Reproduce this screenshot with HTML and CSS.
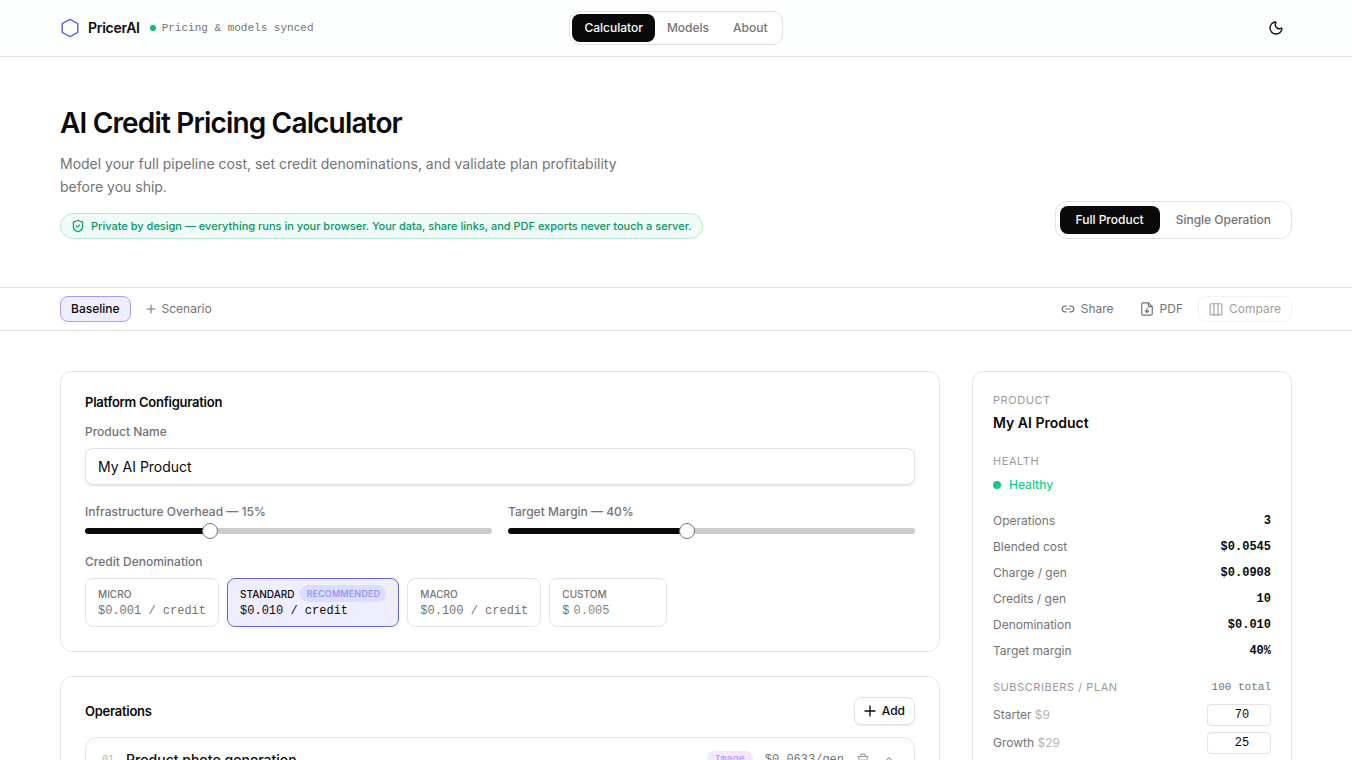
FILE: index.html
```
<!DOCTYPE html>
<html lang="en">
<head>
	<meta charset="UTF-8">
	<meta name="viewport" content="width=device-width, initial-scale=1">
	<title>PricerAI</title>
	<link rel="stylesheet" href="styles.css">
</head>
<body>
	<header class="header">
		<div class="wrap header-in">
			<div class="brand">
				<svg class="logo" width="20" height="20" viewBox="0 0 20 20"><path d="M10 1.3l7.800 4.300v8.800L10 18.700l-7.800-4.300V5.600z"/></svg>
				<span class="brand-name">PricerAI</span>
				<span class="sync"><i class="dot"></i>Pricing &amp; models synced</span>
			</div>
			<nav class="seg">
				<a class="on" href="#">Calculator</a>
				<a href="#">Models</a>
				<a href="#">About</a>
			</nav>
			<button class="theme" type="button" aria-label="Toggle theme">
				<svg class="icon" width="16" height="16" viewBox="0 0 24 24"><path d="M20.985 12.486a9 9 0 1 1-9.473-9.472c.405-.022.617.46.402.803a6 6 0 0 0 8.268 8.268c.344-.215.825-.004.803.401"/></svg>
			</button>
		</div>
	</header>

	<section class="wrap hero">
		<div>
			<h1>AI Credit Pricing Calculator</h1>
			<p class="intro">Model your full pipeline cost, set credit denominations, and validate plan profitability before you ship.</p>
			<p class="private">
				<svg class="icon" width="14" height="14" viewBox="0 0 24 24"><path d="M20 13c0 5-3.500 7.500-7.660 8.950a1 1 0 0 1-.67-.01C7.500 20.500 4 18 4 13V6a1 1 0 0 1 1-1c2 0 4.500-1.200 6.240-2.720a1.170 1.170 0 0 1 1.520 0C14.510 3.810 17 5 19 5a1 1 0 0 1 1 1z"/><path d="m9 12 2 2 4-4"/></svg>
				Private by design — everything runs in your browser. Your data, share links, and PDF exports never touch a server.
			</p>
		</div>
		<div class="seg seg-mode">
			<button class="on" type="button">Full Product</button>
			<button type="button">Single Operation</button>
		</div>
	</section>

	<div class="toolbar">
		<div class="wrap toolbar-in">
			<button class="tool tool-on" type="button">Baseline</button>
			<button class="tool" type="button">
				<svg class="icon" width="10" height="10" viewBox="0 0 10 10"><path d="M5 1v8M1 5h8" stroke-width="1"/></svg>
				Scenario
			</button>
			<span class="space"></span>
			<button class="tool" type="button">
				<svg class="icon" width="14" height="14" viewBox="0 0 24 24"><path d="M9 17H7A5 5 0 0 1 7 7h2M15 7h2a5 5 0 1 1 0 10h-2M8 12h8"/></svg>
				Share
			</button>
			<button class="tool" type="button">
				<svg class="icon" width="14" height="14" viewBox="0 0 24 24"><path d="M14.500 1.500H5a2 2 0 0 0-2 2v17a2 2 0 0 0 2 2h14a2 2 0 0 0 2-2V8z"/><path d="M14.500 1.500V8H21M12 11v7M9 15l3 3 3-3"/></svg>
				PDF
			</button>
			<button class="tool tool-off" type="button" disabled>
				<svg class="icon" width="14" height="14" viewBox="0 0 24 24"><rect x="2" y="3" width="20" height="19" rx="2"/><path d="M8.500 3v19M15.500 3v19"/></svg>
				Compare
			</button>
		</div>
	</div>

	<main class="wrap main">
		<div class="col">
			<section class="card">
				<h2>Platform Configuration</h2>
				<label class="label" for="name">Product Name</label>
				<input class="text" id="name" type="text" value="My AI Product">
				<div class="sliders">
					<div>
						<label class="label" for="infra">Infrastructure Overhead — 15%</label>
						<input class="range" id="infra" type="range" min="0" max="50" value="15" style="--fill: 30%">
					</div>
					<div>
						<label class="label" for="margin">Target Margin — 40%</label>
						<input class="range" id="margin" type="range" min="5" max="85" value="40" style="--fill: 44%">
					</div>
				</div>
				<div class="label">Credit Denomination</div>
				<div class="options">
					<button class="option" type="button">
						<span class="option-name">Micro</span>
						<span class="option-val">$0.001 / credit</span>
					</button>
					<button class="option option-on" type="button">
						<span class="option-name">Standard <em>Recommended</em></span>
						<span class="option-val">$0.010 / credit</span>
					</button>
					<button class="option" type="button">
						<span class="option-name">Macro</span>
						<span class="option-val">$0.100 / credit</span>
					</button>
					<div class="option">
						<label class="option-name" for="custom">Custom</label>
						<span class="option-val">$<input id="custom" type="text" placeholder="0.005"></span>
					</div>
				</div>
			</section>

			<section class="card">
				<div class="card-head">
					<h2>Operations</h2>
					<button class="add" type="button">
						<svg class="icon" width="12" height="12" viewBox="0 0 12 12"><path d="M6 1v10M1 6h10" stroke-width="1.300"/></svg>
						Add
					</button>
				</div>
				<div class="op">
					<span class="op-num">01</span>
					<span class="op-name">Product photo generation</span>
					<span class="tag">Image</span>
					<span class="op-cost">$0.0633/gen</span>
					<button class="op-btn" type="button" aria-label="Delete">
						<svg class="icon" width="14" height="14" viewBox="0 0 24 24"><path d="M3 6h18M19 6v14a2 2 0 0 1-2 2H7a2 2 0 0 1-2-2V6M8 6V4a2 2 0 0 1 2-2h4a2 2 0 0 1 2 2v2M10 11v6M14 11v6"/></svg>
					</button>
					<button class="op-btn" type="button" aria-label="Collapse">
						<svg class="icon" width="14" height="14" viewBox="0 0 24 24"><path d="m7 13 5-5 5 5"/></svg>
					</button>
				</div>
			</section>
		</div>

		<aside class="card side">
			<h3>Product</h3>
			<p class="side-name">My AI Product</p>
			<h3>Health</h3>
			<p class="health"><i class="dot"></i>Healthy</p>
			<dl class="stats">
				<div><dt>Operations</dt><dd>3</dd></div>
				<div><dt>Blended cost</dt><dd>$0.0545</dd></div>
				<div><dt>Charge / gen</dt><dd>$0.0908</dd></div>
				<div><dt>Credits / gen</dt><dd>10</dd></div>
				<div><dt>Denomination</dt><dd>$0.010</dd></div>
				<div><dt>Target margin</dt><dd>40%</dd></div>
			</dl>
			<div class="subs-head"><h3>Subscribers / plan</h3><span>100 total</span></div>
			<div class="plan">
				<label for="starter">Starter <span>$9</span></label>
				<input id="starter" type="text" inputmode="numeric" value="70">
			</div>
			<div class="plan">
				<label for="growth">Growth <span>$29</span></label>
				<input id="growth" type="text" inputmode="numeric" value="25">
			</div>
		</aside>
	</main>
</body>
</html>
```

FILE: styles.css
```
*{ margin: 0; padding: 0; box-sizing: border-box; }
:root{ --ink: #0a0a0a; --gray: #737373; --light: #a1a1a1; --line: #e2e2e5; --mono: "Liberation Mono", monospace; }
html{ scrollbar-width: none; }
body{ font: 12px/16px Inter, sans-serif; color: var(--ink); background: #fff; }
button, input{ font: inherit; color: inherit; border: 0; background: none; outline: 0; }
button{ cursor: pointer; }
a{ color: inherit; text-decoration: none; }
h1, h2, h3{ font-weight: 600; }
.wrap{ max-width: 1280px; margin: 0 auto; padding: 0 24px; }
.icon{ fill: none; stroke: currentColor; stroke-width: 2; stroke-linecap: round; stroke-linejoin: round; flex: none; }
.dot{ width: 6px; height: 6px; border-radius: 50%; background: #10b981; flex: none; }

/* header */
.header{ border-bottom: 1px solid var(--line); background: #fdfefe; }
.header-in{ display: grid; grid-template-columns: 1fr auto 1fr; align-items: center; height: 56px; }
.brand{ display: flex; align-items: center; gap: 8px; }
.logo{ fill: none; stroke: #6366f1; stroke-width: 1.5; stroke-linejoin: round; }
.brand-name{ font-size: 14px; font-weight: 600; letter-spacing: -0.02em; }
.sync{ display: flex; align-items: center; gap: 6px; margin-left: 2px; font: 11px/16px var(--mono); color: var(--gray); }
.seg{ display: flex; padding: 2px; border: 1px solid var(--line); border-radius: 10px; background: #fff; }
.seg a, .seg button{ padding: 0 12px; line-height: 28px; border-radius: 8px; font-weight: 500; color: var(--gray); }
.seg .on{ background: var(--ink); color: #fff; }
.theme{ justify-self: end; display: flex; padding: 8px; }

/* hero */
.hero{ display: flex; justify-content: space-between; align-items: flex-end; padding-top: 48px; padding-bottom: 48px; }
h1{ font-size: 28px; line-height: 36px; letter-spacing: -0.03em; }
.intro{ max-width: 576px; margin: 11px 0 15px; font-size: 14px; line-height: 23px; color: var(--gray); }
.private{ display: flex; width: fit-content; align-items: center; gap: 6px; padding: 4px 10px; border: 1px solid #b5ead6; border-radius: 13px; background: #f0fbf7; font-size: 11px; font-weight: 500; color: #059669; }
.seg-mode{ padding: 4px; border-radius: 12px; }
.seg-mode button{ padding: 0 16px; }

/* toolbar */
.toolbar{ border: solid var(--line); border-width: 1px 0; }
.toolbar-in{ display: flex; gap: 4px; padding-top: 8px; padding-bottom: 8px; }
.space{ flex: 1; }
.tool{ display: flex; align-items: center; gap: 6px; padding: 4px 10px; border: 1px solid transparent; border-radius: 8px; color: var(--gray); }
.tool-on{ border-color: #a5a0f3; background: #efeefe; color: var(--ink); font-weight: 500; }
.tool-off{ border-color: #f2f2f3; color: var(--light); }

/* cards */
.main{ display: grid; grid-template-columns: minmax(0, 1fr) 320px; gap: 32px; align-items: start; padding-top: 40px; padding-bottom: 48px; }
.col{ display: grid; gap: 24px; }
.card{ padding: 20px 24px 24px; border: 1px solid var(--line); border-radius: 12px; }
h2{ font-size: 13px; line-height: 20px; letter-spacing: -0.02em; }
.label{ display: block; font-weight: 500; color: var(--gray); }
.card > h2{ margin-bottom: 12px; }
.text{ width: 100%; height: 37px; margin: 8px 0 19px; padding: 0 12px; border: 1px solid var(--line); border-radius: 8px; box-shadow: 0 1px 2px rgba(0,0,0,.12); font-size: 14px; }
.sliders{ display: grid; grid-template-columns: 1fr 1fr; gap: 16px; margin-bottom: 15px; }
.range{ -webkit-appearance: none; appearance: none; display: block; width: 100%; height: 16px; margin-top: 3px; }
.range::-webkit-slider-runnable-track{ height: 6px; border-radius: 3px; background: linear-gradient(to right, var(--ink) var(--fill), #ccc var(--fill)); }
.range::-webkit-slider-thumb{ -webkit-appearance: none; width: 16px; height: 16px; margin-top: -5px; border: 1px solid #777; border-radius: 50%; background: #fff; }

.options{ display: flex; flex-wrap: wrap; gap: 8px; margin-top: 8px; }
.option{ padding: 6px 12px 5px; border: 1px solid var(--line); border-radius: 8px; text-align: left; color: var(--gray); }
.option-name{ display: flex; align-items: center; gap: 6px; height: 17px; font-size: 10px; font-weight: 500; text-transform: uppercase; }
.option-name em{ padding: 0 6px; border-radius: 9px; background: #dcdcfd; color: #8f90f5; font-size: 9px; line-height: 17px; font-style: normal; letter-spacing: 0.02em; }
.option-val{ display: flex; gap: 4px; font: 12px/19px var(--mono); }
.option-val input{ width: 80px; }
.option-val input::placeholder{ color: #858585; }
.option-on{ border-color: #6366d8; background: #efeefe; color: var(--ink); }

.card-head{ display: flex; justify-content: space-between; align-items: center; margin-bottom: 12px; }
.add{ display: flex; align-items: center; gap: 6px; height: 28px; padding: 0 9px; border: 1px solid var(--line); border-radius: 8px; box-shadow: 0 1px 2px rgba(0,0,0,.1); font-weight: 500; }
.op{ display: flex; align-items: center; gap: 12px; padding: 12px 18px 12px 16px; border: 1px solid var(--line); border-radius: 12px; line-height: 20px; }
.op-num{ font: 10px/20px var(--mono); color: #b5b5b5; }
.op-name{ flex: 1; font-size: 14px; font-weight: 500; }
.tag{ padding: 0 8px; border-radius: 7px; background: #f3e8ff; color: #c084fc; font: 10px/18px var(--mono); }
.op-cost{ font-family: var(--mono); color: var(--gray); }
.op-btn{ display: flex; color: var(--light); }

/* summary */
.side{ padding: 20px; }
h3{ font-size: 11px; line-height: 16px; font-weight: 400; text-transform: uppercase; letter-spacing: 0.05em; color: #999; }
.side-name{ margin: 5px 0 20px; font-size: 14px; line-height: 20px; font-weight: 600; }
.health{ display: flex; align-items: center; gap: 8px; margin: 8px 0 15px; font-weight: 500; color: #10d090; }
.health .dot{ width: 8px; height: 8px; background: #10c98f; }
.stats div{ display: flex; justify-content: space-between; line-height: 26px; }
.stats dt{ color: var(--gray); }
.stats dd{ font-family: var(--mono); font-weight: 700; }
.subs-head{ display: flex; justify-content: space-between; margin: 15px 0 9px; font: 11px/16px var(--mono); color: var(--gray); }
.subs-head h3{ font-family: Inter, sans-serif; }
.plan{ display: flex; justify-content: space-between; align-items: center; margin-bottom: 6px; color: var(--gray); }
.plan span{ color: #b5b5b5; }
.plan input{ width: 64px; height: 22px; padding: 0 2px 0 8px; border: 1px solid var(--line); border-radius: 4px; font-family: var(--mono); text-align: center; color: var(--ink); }
```
